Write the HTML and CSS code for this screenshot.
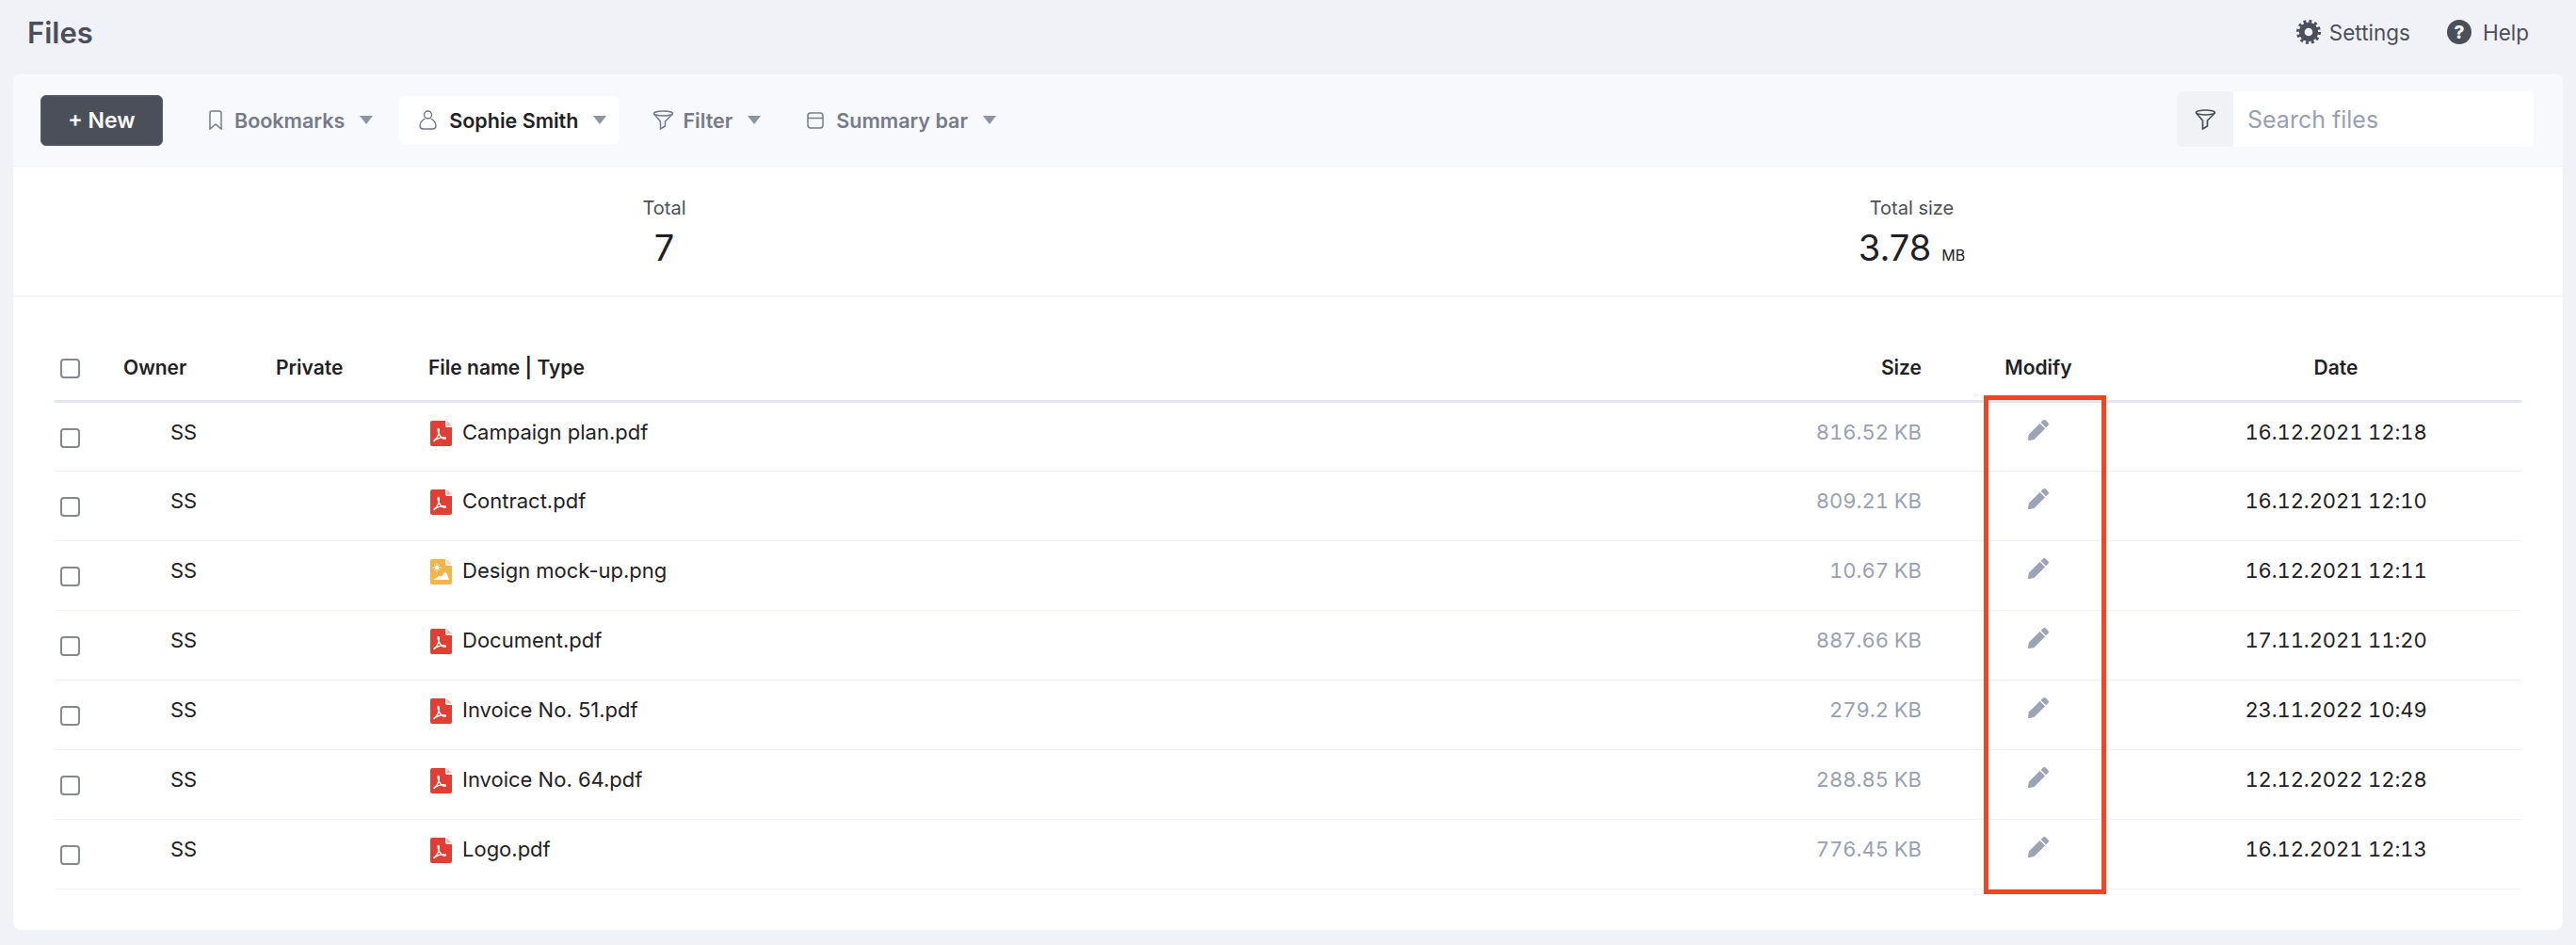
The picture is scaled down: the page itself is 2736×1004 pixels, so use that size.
FILE: index.html
```html
<!DOCTYPE html>
<html lang="en">
<head>
<meta charset="utf-8">
<title>Files</title>
<link rel="stylesheet" href="styles.css">
</head>
<body>
<svg class="defs" width="0" height="0" aria-hidden="true">
  <symbol id="i-pdf" viewBox="0 0 23 27">
    <path fill="#e13f33" d="M2 0h14v5a2 2 0 0 0 2 2h5v18a2 2 0 0 1-2 2H2a2 2 0 0 1-2-2V2a2 2 0 0 1 2-2z"/>
    <path fill="#f3b8b2" d="M17.500 0 23 5.500h-5.500z"/>
    <path fill="none" stroke="#fff" stroke-width="1.300" d="M4 21c2-1 4-4 5-7.500.6-2.500.6-5-.4-5s-.6 3 1 6c1.200 2.300 3 4.300 4.600 4.600 2 .3 2.800-.6 2-1.100-1.200-.7-5-.2-8 .9-2 .8-4 2.600-4.200 3.100z"/>
  </symbol>
  <symbol id="i-img" viewBox="0 0 23 27">
    <path fill="#f2b44c" d="M2 0h14v5a2 2 0 0 0 2 2h5v18a2 2 0 0 1-2 2H2a2 2 0 0 1-2-2V2a2 2 0 0 1 2-2z"/>
    <path fill="#f8dca9" d="M17.500 0 23 5.500h-5.500z"/>
    <path fill="#fff" d="M3 22c3-1 5-4 7-4 1 0 1.500 1 2.500 0s2-4 3.500-4 2.500 3 4 8z"/>
    <circle cx="7" cy="9" r="2" fill="#fff"/>
    <path stroke="#fff" stroke-width=".8" d="M7 4.500v9M2.500 9h9M4 6l6 6M10 6l-6 6"/>
  </symbol>
  <symbol id="i-pen" viewBox="0 0 512 512">
    <path fill="#9ca3b4" d="M497.900 142.100l-46.100 46.100c-4.700 4.700-12.300 4.700-17 0l-111-111c-4.700-4.700-4.700-12.300 0-17l46.100-46.100c18.700-18.700 49.100-18.700 67.900 0l60.100 60.100c18.800 18.700 18.800 49.100 0 67.900zM284.200 99.800L21.600 362.400.4 483.900c-2.900 16.400 11.400 30.700 27.800 27.800l121.500-21.300 262.600-262.600c4.700-4.700 4.700-12.300 0-17l-111-111c-4.800-4.700-12.400-4.700-17.100 0z"/>
  </symbol>
</svg>

<header class="topbar">
  <h1 class="title">Files</h1>
  <nav class="top-links">
    <a class="top-link">
      <svg class="gear" viewBox="0 0 24 24"><g fill="none" stroke="#4b4f59"><circle cx="12" cy="12" r="6.700" stroke-width="5.400"/><circle cx="12" cy="12" r="10.400" stroke-width="3.200" stroke-dasharray="2.720 2.725"/></g></svg>
      <span>Settings</span>
    </a>
    <a class="top-link help-link">
      <span class="help-dot">?</span>
      <span>Help</span>
    </a>
  </nav>
</header>

<main class="card">
  <section class="toolbar">
    <button class="new-btn">+ New</button>
    <div class="tool tool-first">
      <svg class="ti" width="14" height="21" viewBox="0 0 14 21"><path fill="none" stroke="#757b8a" stroke-width="1.500" d="M1 3a2 2 0 0 1 2-2h8a2 2 0 0 1 2 2v17l-6-5-6 5z"/></svg>
      <span>Bookmarks</span><i class="caret"></i>
    </div>
    <div class="tool tool-active">
      <svg class="ti" width="19" height="21" viewBox="0 0 19 21"><g fill="none" stroke="#6f7584" stroke-width="1.400"><circle cx="9.500" cy="5" r="4"/><path d="M6.500 9C3 11 1 14 1 16.500 1 19 3 20 5 20h9c2 0 4-1 4-3.500C18 14 16 11 12.500 9"/></g></svg>
      <span>Sophie Smith</span><i class="caret"></i>
    </div>
    <div class="tool">
      <svg class="ti ti-tight" width="23" height="21" viewBox="0 0 23 21"><g fill="none" stroke="#757b8a" stroke-width="1.500"><ellipse cx="11.500" cy="3.500" rx="10" ry="2.500"/><path d="M1.500 4l7 8v8l5-3v-5l8-8"/></g></svg>
      <span>Filter</span><i class="caret"></i>
    </div>
    <div class="tool">
      <svg class="ti" width="18" height="18" viewBox="0 0 18 18"><g fill="none" stroke="#757b8a" stroke-width="1.500"><rect x="1" y="1" width="16" height="16" rx="3"/><path d="M1 6.500h16"/></g></svg>
      <span>Summary bar</span><i class="caret"></i>
    </div>
    <div class="search">
      <span class="search-icon">
        <svg width="23" height="22" viewBox="0 0 23 22"><g fill="none" stroke="#4b4f59" stroke-width="1.700"><ellipse cx="11.500" cy="3.500" rx="10" ry="2.500"/><path d="M1.500 4l7 8v9l5-3v-6l8-8"/></g></svg>
      </span>
      <span class="search-input">Search files</span>
    </div>
  </section>

  <section class="stats">
    <div class="stat">
      <div class="stat-label">Total</div>
      <div class="stat-value">7</div>
    </div>
    <div class="stat">
      <div class="stat-label">Total size</div>
      <div class="stat-value">3.78<small class="unit">MB</small></div>
    </div>
  </section>

  <section class="table-wrap">
    <div class="highlight"></div>
    <table class="files">
      <colgroup>
        <col class="c-check"><col class="c-owner"><col class="c-private"><col class="c-name"><col class="c-size"><col class="c-mod"><col class="c-date">
      </colgroup>
      <thead>
        <tr>
          <th><span class="cb"></span></th>
          <th>Owner</th>
          <th>Private</th>
          <th>File name | Type</th>
          <th class="right">Size</th>
          <th class="center">Modify</th>
          <th class="center">Date</th>
        </tr>
      </thead>
      <tbody>
        <tr><td><span class="cb"></span></td><td class="owner">SS</td><td></td><td><span class="file"><svg class="ficon"><use href="#i-pdf"/></svg>Campaign plan.pdf</span></td><td class="right size">816.52 KB</td><td class="center"><svg class="pen"><use href="#i-pen"/></svg></td><td class="center date">16.12.2021 12:18</td></tr>
        <tr><td><span class="cb"></span></td><td class="owner">SS</td><td></td><td><span class="file"><svg class="ficon"><use href="#i-pdf"/></svg>Contract.pdf</span></td><td class="right size">809.21 KB</td><td class="center"><svg class="pen"><use href="#i-pen"/></svg></td><td class="center date">16.12.2021 12:10</td></tr>
        <tr><td><span class="cb"></span></td><td class="owner">SS</td><td></td><td><span class="file"><svg class="ficon"><use href="#i-img"/></svg>Design mock-up.png</span></td><td class="right size">10.67 KB</td><td class="center"><svg class="pen"><use href="#i-pen"/></svg></td><td class="center date">16.12.2021 12:11</td></tr>
        <tr><td><span class="cb"></span></td><td class="owner">SS</td><td></td><td><span class="file"><svg class="ficon"><use href="#i-pdf"/></svg>Document.pdf</span></td><td class="right size">887.66 KB</td><td class="center"><svg class="pen"><use href="#i-pen"/></svg></td><td class="center date">17.11.2021 11:20</td></tr>
        <tr><td><span class="cb"></span></td><td class="owner">SS</td><td></td><td><span class="file"><svg class="ficon"><use href="#i-pdf"/></svg>Invoice No. 51.pdf</span></td><td class="right size">279.2 KB</td><td class="center"><svg class="pen"><use href="#i-pen"/></svg></td><td class="center date">23.11.2022 10:49</td></tr>
        <tr><td><span class="cb"></span></td><td class="owner">SS</td><td></td><td><span class="file"><svg class="ficon"><use href="#i-pdf"/></svg>Invoice No. 64.pdf</span></td><td class="right size">288.85 KB</td><td class="center"><svg class="pen"><use href="#i-pen"/></svg></td><td class="center date">12.12.2022 12:28</td></tr>
        <tr><td><span class="cb"></span></td><td class="owner">SS</td><td></td><td><span class="file"><svg class="ficon"><use href="#i-pdf"/></svg>Logo.pdf</span></td><td class="right size">776.45 KB</td><td class="center"><svg class="pen"><use href="#i-pen"/></svg></td><td class="center date">16.12.2021 12:13</td></tr>
      </tbody>
    </table>
  </section>
</main>
</body>
</html>
```
FILE: styles.css
```css
* { box-sizing: border-box; }
html, body { margin: 0; padding: 0; }
body {
  width: 2736px;
  height: 1004px;
  overflow: hidden;
  background: #f1f2f8;
  font-family: Inter, "Liberation Sans", sans-serif;
  color: #1f2126;
  font-size: 22px;
}
.defs { display: block; height: 0; }
.topbar {
  height: 79px;
  padding: 0 50px 11px 29px;
  display: flex;
  align-items: center;
  justify-content: space-between;
}
.title { margin: 0; font-size: 31px; font-weight: 600; color: #4b4f59; }
.top-links { display: flex; align-items: center; gap: 39px; }
.top-link { display: flex; align-items: center; gap: 9px; font-size: 22.500px; color: #4b4f59; }
.help-link { gap: 12px; }
.gear { width: 26px; height: 26px; }
.help-dot {
  width: 26px; height: 26px; border-radius: 50%;
  background: #4b4f59; color: #fff;
  font-size: 19px; font-weight: 800;
  display: flex; align-items: center; justify-content: center;
}
.card {
  margin: 0 14px;
  height: 909px;
  background: #fff;
  border-radius: 8px;
  overflow: hidden;
}
.toolbar {
  height: 98px;
  padding: 0 31px 0 29px;
  background: #f8f9fd;
  border-bottom: 1px solid #eff1f6;
  display: flex;
  align-items: center;
  gap: 14px;
}
.new-btn {
  width: 130px; height: 54px;
  background: #4b4f59; color: #fff;
  border: 1px solid #5b5f68; border-radius: 6px;
  font: 600 23px Inter, "Liberation Sans", sans-serif;
}
.tool {
  height: 51px;
  padding: 0 14px 0 21px;
  display: flex;
  align-items: center;
  color: #757b8a;
  font-size: 21.500px;
  font-weight: 600;
  border-radius: 6px;
}
.tool-first { margin-left: 14px; }
.tool-active { background: #fff; color: #1f2126; }
.ti { margin-right: 13px; flex: none; }
.ti-tight { margin-right: 9px; }
.caret {
  width: 0; height: 0; margin-left: 16px;
  border-left: 7px solid transparent;
  border-right: 7px solid transparent;
  border-top: 9px solid #8e94a3;
}
.search {
  margin-left: auto;
  width: 379px; height: 59px;
  display: flex;
  background: #fff;
  border-radius: 6px;
  overflow: hidden;
  margin-top: -2px;
}
.search-icon {
  width: 60px;
  background: #f1f2f6;
  display: flex; align-items: center; justify-content: center;
}
.search-input {
  padding-left: 15px;
  font-size: 25px;
  color: #99a1b0;
  display: flex; align-items: center;
}
.stats {
  height: 138px;
  padding: 0 29px;
  border-bottom: 1px solid #f1f2f8;
  display: grid;
  grid-template-columns: 1fr 1fr;
}
.stat { text-align: center; padding-top: 32px; }
.stat-label { font-size: 20px; line-height: 24px; color: #4b4f59; }
.stat-value { font-size: 38px; line-height: 46px; margin-top: 7px; color: #1f2126; }
.unit { font-size: 16px; margin-left: 11px; }
.table-wrap { position: relative; padding: 0 44px; }
.highlight {
  position: absolute;
  left: 2093px; top: 105px;
  width: 130px; height: 530px;
  border: 5px solid #f04425;
  pointer-events: none;
}
.files {
  width: 2620px;
  border-collapse: collapse;
  table-layout: fixed;
}
.c-check { width: 73px; }
.c-owner { width: 162px; }
.c-private { width: 162px; }
.c-name { width: 1245px; }
.c-size { width: 341px; }
.c-mod { width: 248px; }
.c-date { width: 389px; }
.files th {
  height: 111px;
  padding: 0 0 18px;
  text-align: left;
  vertical-align: bottom;
  font-size: 21px;
  font-weight: 600;
  line-height: 32px;
  border-bottom: 3px solid #e3e6ee;
}
.files th:last-child, .files td:last-child { padding-right: 5px; }
.files td {
  height: 74px;
  padding: 15px 0 0;
  vertical-align: top;
  line-height: 32px;
  border-bottom: 1px solid #f0f1f6;
}
.files th.right, .files td.right { text-align: right; }
.files th.center, .files td.center { text-align: center; }
.owner { padding-left: 50px !important; }
.size { color: #99a1b0; font-variant-numeric: tabular-nums; }
.date { font-variant-numeric: tabular-nums; letter-spacing: -0.1px; }
.cb {
  display: block;
  width: 21px; height: 21px;
  margin-left: 6px; margin-top: 12px;
  border: 2px solid #85888f;
  border-radius: 4px;
  background: #fff;
}
.files th .cb { margin-bottom: 5px; }
.file { display: flex; align-items: center; padding-left: 2px; }
.ficon { width: 23px; height: 27px; margin-right: 11px; margin-top: 3px; flex: none; }
.pen { width: 22px; height: 22px; display: inline-block; margin-top: 3px; vertical-align: top; }
```
